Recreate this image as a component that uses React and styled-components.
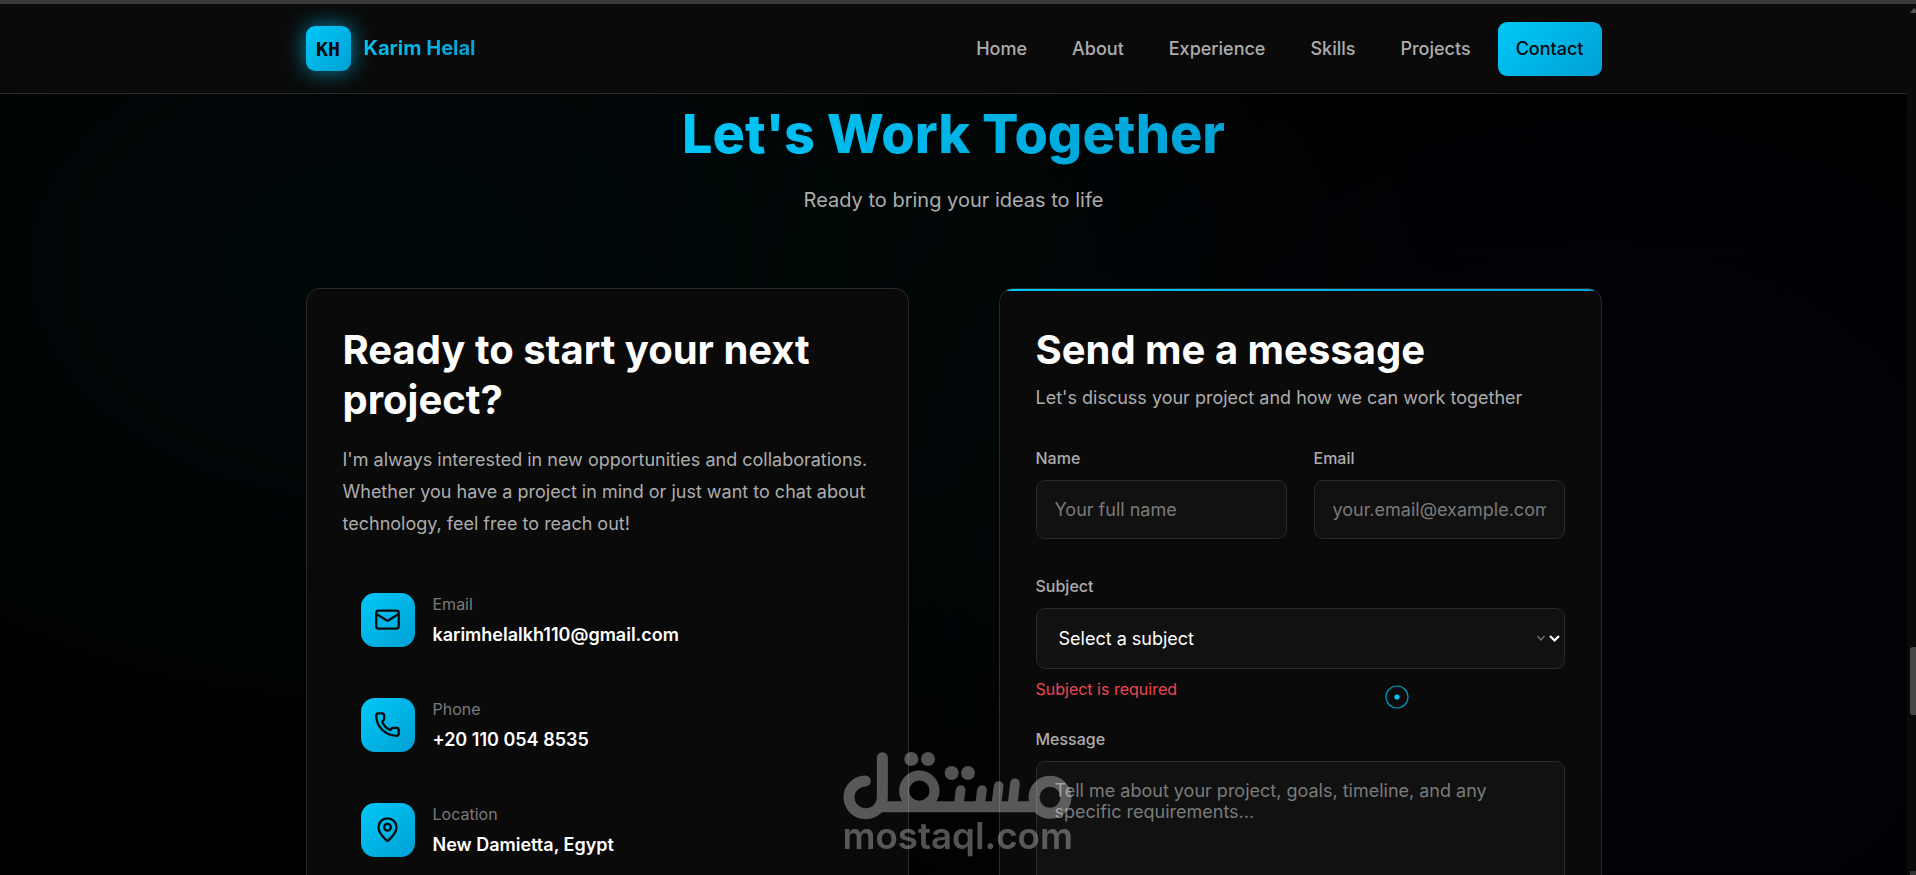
import React from "react";
import styled, { createGlobalStyle, css } from "styled-components";
import { Mail, Phone, MapPin } from "lucide-react";

const accent = "linear-gradient(135deg, #00c8f8 0%, #00a0d4 100%)";
const line = "#2a2a2a";
const muted = "#adadad";
const dim = "#7a7a7a";
const panel = "#0a0a0a";

const GlobalStyle = createGlobalStyle`
  *, *::before, *::after { box-sizing: border-box; }
  body { margin: 0; background: #000; color: #fff; font-family: Inter, "Liberation Sans", sans-serif; }
  h2, h3, p { margin: 0; }
`;

const Shell = styled.div`
  height: 100vh;
  overflow: hidden;
  display: flex;
  flex-direction: column;
`;

const WindowEdge = styled.div`
  flex: none;
  height: 4px;
  background: #3a3a3c;
`;

const Viewport = styled.div`
  flex: 1;
  min-height: 0;
  display: grid;
  grid-template-columns: minmax(0, 1fr) 9px;
`;

const Page = styled.div`
  overflow: hidden;
  background:
    radial-gradient(ellipse 46% 68% at 20% 30%, rgba(0, 200, 248, 0.04), transparent),
    radial-gradient(ellipse 26% 90% at 52% 50%, rgba(0, 200, 120, 0.025), transparent),
    radial-gradient(ellipse 44% 90% at 84% 68%, rgba(110, 30, 255, 0.036), transparent),
    #000;
`;

const Rail = styled.div`
  display: grid;
  grid-template-rows: 9px 634fr 68px 156fr 4px;
  justify-items: end;
  background: ${panel};
`;

const RailThumb = styled.div`
  grid-row: 3;
  width: 6px;
  height: 100%;
  border-radius: 3px 0 0 3px;
  background: #474747;
`;

const RailArrow = styled.svg`
  grid-row: 1;
  width: 6px;
  height: 9px;
`;

const RailEnd = styled.div`
  grid-row: 5;
  width: 6px;
  background: #333;
`;

const Container = styled.div`
  width: 100%;
  max-width: 1332px;
  margin: 0 auto;
  padding: 0 18px;
`;

const Header = styled.header`
  background: ${panel};
  border-bottom: 1px solid ${line};
`;

const HeaderRow = styled(Container)`
  height: 89px;
  display: flex;
  align-items: center;
  justify-content: space-between;
`;

const Brand = styled.a`
  display: flex;
  align-items: center;
  gap: 13px;
  text-decoration: none;
`;

const BrandMark = styled.span`
  width: 45px;
  height: 45px;
  display: grid;
  place-items: center;
  border-radius: 9px;
  background: ${accent};
  box-shadow: 0 0 22px rgba(0, 200, 248, 0.65);
  color: #0a0a0a;
  font: 700 20px "DejaVu Sans Mono", monospace;
`;

const gradientText = css`
  background: ${accent};
  background-clip: text;
  color: transparent;
`;

const BrandName = styled.span`
  padding-bottom: 2px;
  font-size: 20px;
  font-weight: 700;
  line-height: 30px;
  ${gradientText}
`;

const Nav = styled.nav`
  display: flex;
  gap: 9px;
`;

const NavLink = styled.a`
  padding: 12px 18px;
  border-radius: 9px;
  font-size: 18px;
  line-height: 30px;
  font-weight: 500;
  text-decoration: none;
  color: ${(p) => (p.$active ? "#0a0a0a" : muted)};
  background: ${(p) => (p.$active ? accent : "none")};
`;

const Intro = styled.div`
  display: flex;
  flex-direction: column;
  align-items: center;
  gap: 18px;
  padding-top: 7px;
  margin-bottom: 72px;
`;

const Title = styled.h2`
  font-size: 54px;
  line-height: 65px;
  font-weight: 800;
  ${gradientText}
`;

const Tagline = styled.p`
  font-size: 20px;
  line-height: 32px;
  color: ${muted};
`;

const Columns = styled.div`
  display: grid;
  grid-template-columns: 1fr 1fr;
  gap: 90px;
`;

const Card = styled.section`
  position: relative;
  overflow: hidden;
  padding: 36px;
  border: 1px solid ${line};
  border-radius: 14px;
  background: ${panel};
`;

const CardAccent = styled.div`
  position: absolute;
  inset: 0 0 auto;
  height: 2px;
  background: ${accent};
`;

const CardTitle = styled.h3`
  font-size: 40px;
  line-height: 50px;
  font-weight: 700;
`;

const Lead = styled.p`
  margin-top: 19px;
  font-size: 18px;
  line-height: 32px;
  color: ${muted};
`;

const FormLead = styled.p`
  margin-top: 10px;
  font-size: 18px;
  line-height: 26px;
  color: ${muted};
`;

const ContactList = styled.div`
  display: flex;
  flex-direction: column;
  gap: 14px;
  margin-top: 34px;
`;

const ContactItem = styled.div`
  display: flex;
  align-items: center;
  gap: 18px;
  padding: 14px 18px;
`;

const IconTile = styled.span`
  width: 54px;
  height: 54px;
  display: grid;
  place-items: center;
  border-radius: 14px;
  background: ${accent};
  color: #0a0a0a;
`;

const ContactText = styled.div`
  display: flex;
  flex-direction: column;
  gap: 2px;
  padding-top: 3px;
`;

const ContactLabel = styled.span`
  font-size: 16px;
  line-height: 26px;
  color: ${dim};
`;

const ContactValue = styled.span`
  font-size: 18px;
  line-height: 32px;
  font-weight: 600;
`;

const Form = styled.form`
  display: flex;
  flex-direction: column;
  gap: 26px;
  margin-top: 35px;
`;

const FieldRow = styled.div`
  display: grid;
  grid-template-columns: 1fr 1fr;
  gap: 27px;
  margin-bottom: 9px;
`;

const Field = styled.div`
  display: flex;
  flex-direction: column;
  min-width: 0;
`;

const Label = styled.label`
  margin-bottom: 10px;
  font-size: 16px;
  line-height: 24px;
  font-weight: 500;
  color: ${muted};
`;

const control = css`
  width: 100%;
  border: 1px solid ${line};
  border-radius: 9px;
  background: #111;
  color: #fff;
  font-family: inherit;
  font-size: 18px;
  line-height: 21px;
  outline: none;
  &::placeholder { color: ${dim}; opacity: 1; }
`;

const Input = styled.input`
  ${control}
  height: 59px;
  padding: 0 18px;
`;

const SelectBox = styled.div`
  position: relative;
`;

const Select = styled.select`
  ${control}
  display: block;
  height: 61px;
  padding: 0 22px;
  appearance: none;
`;

const Chevrons = styled.svg`
  position: absolute;
  right: 5px;
  top: 50%;
  width: 24px;
  height: 12px;
  margin-top: -7px;
  pointer-events: none;
`;

const ErrorText = styled.p`
  margin-top: 8px;
  font-size: 16px;
  line-height: 24px;
  color: #ee4452;
`;

const TextArea = styled.textarea`
  ${control}
  display: block;
  height: 180px;
  padding: 18px;
  resize: none;
`;

const Pointer = styled.svg`
  position: fixed;
  left: 1385px;
  top: 685px;
  width: 24px;
  height: 24px;
  pointer-events: none;
`;

const Watermark = styled.svg`
  position: fixed;
  left: 50%;
  bottom: 15px;
  width: 230px;
  height: 110px;
  margin-left: -115px;
  opacity: 0.32;
  pointer-events: none;
`;

const links = ["Home", "About", "Experience", "Skills", "Projects", "Contact"];

const contacts = [
  { icon: Mail, label: "Email", value: "karimhelalkh110@gmail.com" },
  { icon: Phone, label: "Phone", value: "+20 110 054 8535" },
  { icon: MapPin, label: "Location", value: "New Damietta, Egypt" },
];

function ContactForm() {
  return (
    <Form noValidate>
      <FieldRow>
        <Field>
          <Label htmlFor="name">Name</Label>
          <Input id="name" placeholder="Your full name" />
        </Field>
        <Field>
          <Label htmlFor="email">Email</Label>
          <Input id="email" type="email" placeholder="your.email@example.com" />
        </Field>
      </FieldRow>
      <Field>
        <Label htmlFor="subject">Subject</Label>
        <SelectBox>
          <Select id="subject" aria-describedby="subject-error">
            <option>Select a subject</option>
          </Select>
          <Chevrons viewBox="0 0 24 12" fill="none">
            <path d="M1.5 4l3.5 4 3.5-4" stroke="#777" strokeWidth="1.3" />
            <path d="M14 4l4.500 4.500L23 4" stroke="#fff" strokeWidth="2.200" />
          </Chevrons>
        </SelectBox>
        <ErrorText id="subject-error">Subject is required</ErrorText>
      </Field>
      <Field>
        <Label htmlFor="message">Message</Label>
        <TextArea
          id="message"
          placeholder="Tell me about your project, goals, timeline, and any specific requirements..."
        />
      </Field>
    </Form>
  );
}

function MostaqlMark() {
  return (
    <Watermark viewBox="70 60 690 330" aria-label="mostaql.com">
      <g fill="none" stroke="#fff" strokeLinecap="round" strokeWidth="33">
        <path d="M188 83V202A50 49 0 1 1 137 153" />
        <path d="M170 230H660" strokeLinecap="butt" />
        <circle cx="299" cy="182" r="45.500" strokeWidth="30" />
        <circle cx="691" cy="202" r="48" />
        <path d="M423 180L416 230M487 180L480 230M537 168L529 230M586 160L578 230" strokeWidth="29" />
      </g>
      <g fill="#fff">
        <circle cx="275" cy="87" r="21" />
        <circle cx="325" cy="87" r="21" />
        <circle cx="396" cy="129" r="21" />
        <circle cx="445" cy="129" r="21" />
        <text x="414" y="357" textAnchor="middle" fontFamily="Inter, sans-serif" fontSize="110" fontWeight="600">
          mostaql.com
        </text>
      </g>
    </Watermark>
  );
}

export default function App() {
  return (
    <Shell>
      <GlobalStyle />
      <WindowEdge />
      <Viewport>
        <Page>
          <Header>
            <HeaderRow>
              <Brand href="#home">
                <BrandMark>KH</BrandMark>
                <BrandName>Karim Helal</BrandName>
              </Brand>
              <Nav>
                {links.map((name) => (
                  <NavLink key={name} href={`#${name.toLowerCase()}`} $active={name === "Contact"}>
                    {name}
                  </NavLink>
                ))}
              </Nav>
            </HeaderRow>
          </Header>
          <Container as="main">
            <Intro>
              <Title>Let's Work Together</Title>
              <Tagline>Ready to bring your ideas to life</Tagline>
            </Intro>
            <Columns>
              <Card>
                <CardTitle>Ready to start your next project?</CardTitle>
                <Lead>
                  I'm always interested in new opportunities and collaborations. Whether you have a
                  project in mind or just want to chat about technology, feel free to reach out!
                </Lead>
                <ContactList>
                  {contacts.map(({ icon: Icon, label, value }) => (
                    <ContactItem key={label}>
                      <IconTile>
                        <Icon size={27} strokeWidth={2} />
                      </IconTile>
                      <ContactText>
                        <ContactLabel>{label}</ContactLabel>
                        <ContactValue>{value}</ContactValue>
                      </ContactText>
                    </ContactItem>
                  ))}
                </ContactList>
              </Card>
              <Card>
                <CardAccent />
                <CardTitle>Send me a message</CardTitle>
                <FormLead>Let's discuss your project and how we can work together</FormLead>
                <ContactForm />
              </Card>
            </Columns>
          </Container>
        </Page>
        <Rail aria-hidden="true">
          <RailArrow viewBox="0 0 6 9">
            <path d="M0 9L4 4L6 6V9Z" fill="#555" />
          </RailArrow>
          <RailThumb />
          <RailEnd />
        </Rail>
      </Viewport>
      <Pointer viewBox="0 0 24 24">
        <circle cx="12" cy="12" r="11" fill="none" stroke="#0098c2" strokeWidth="1.200" />
        <circle cx="12" cy="12" r="2.600" fill="#00c8f8" />
      </Pointer>
      <MostaqlMark />
    </Shell>
  );
}
